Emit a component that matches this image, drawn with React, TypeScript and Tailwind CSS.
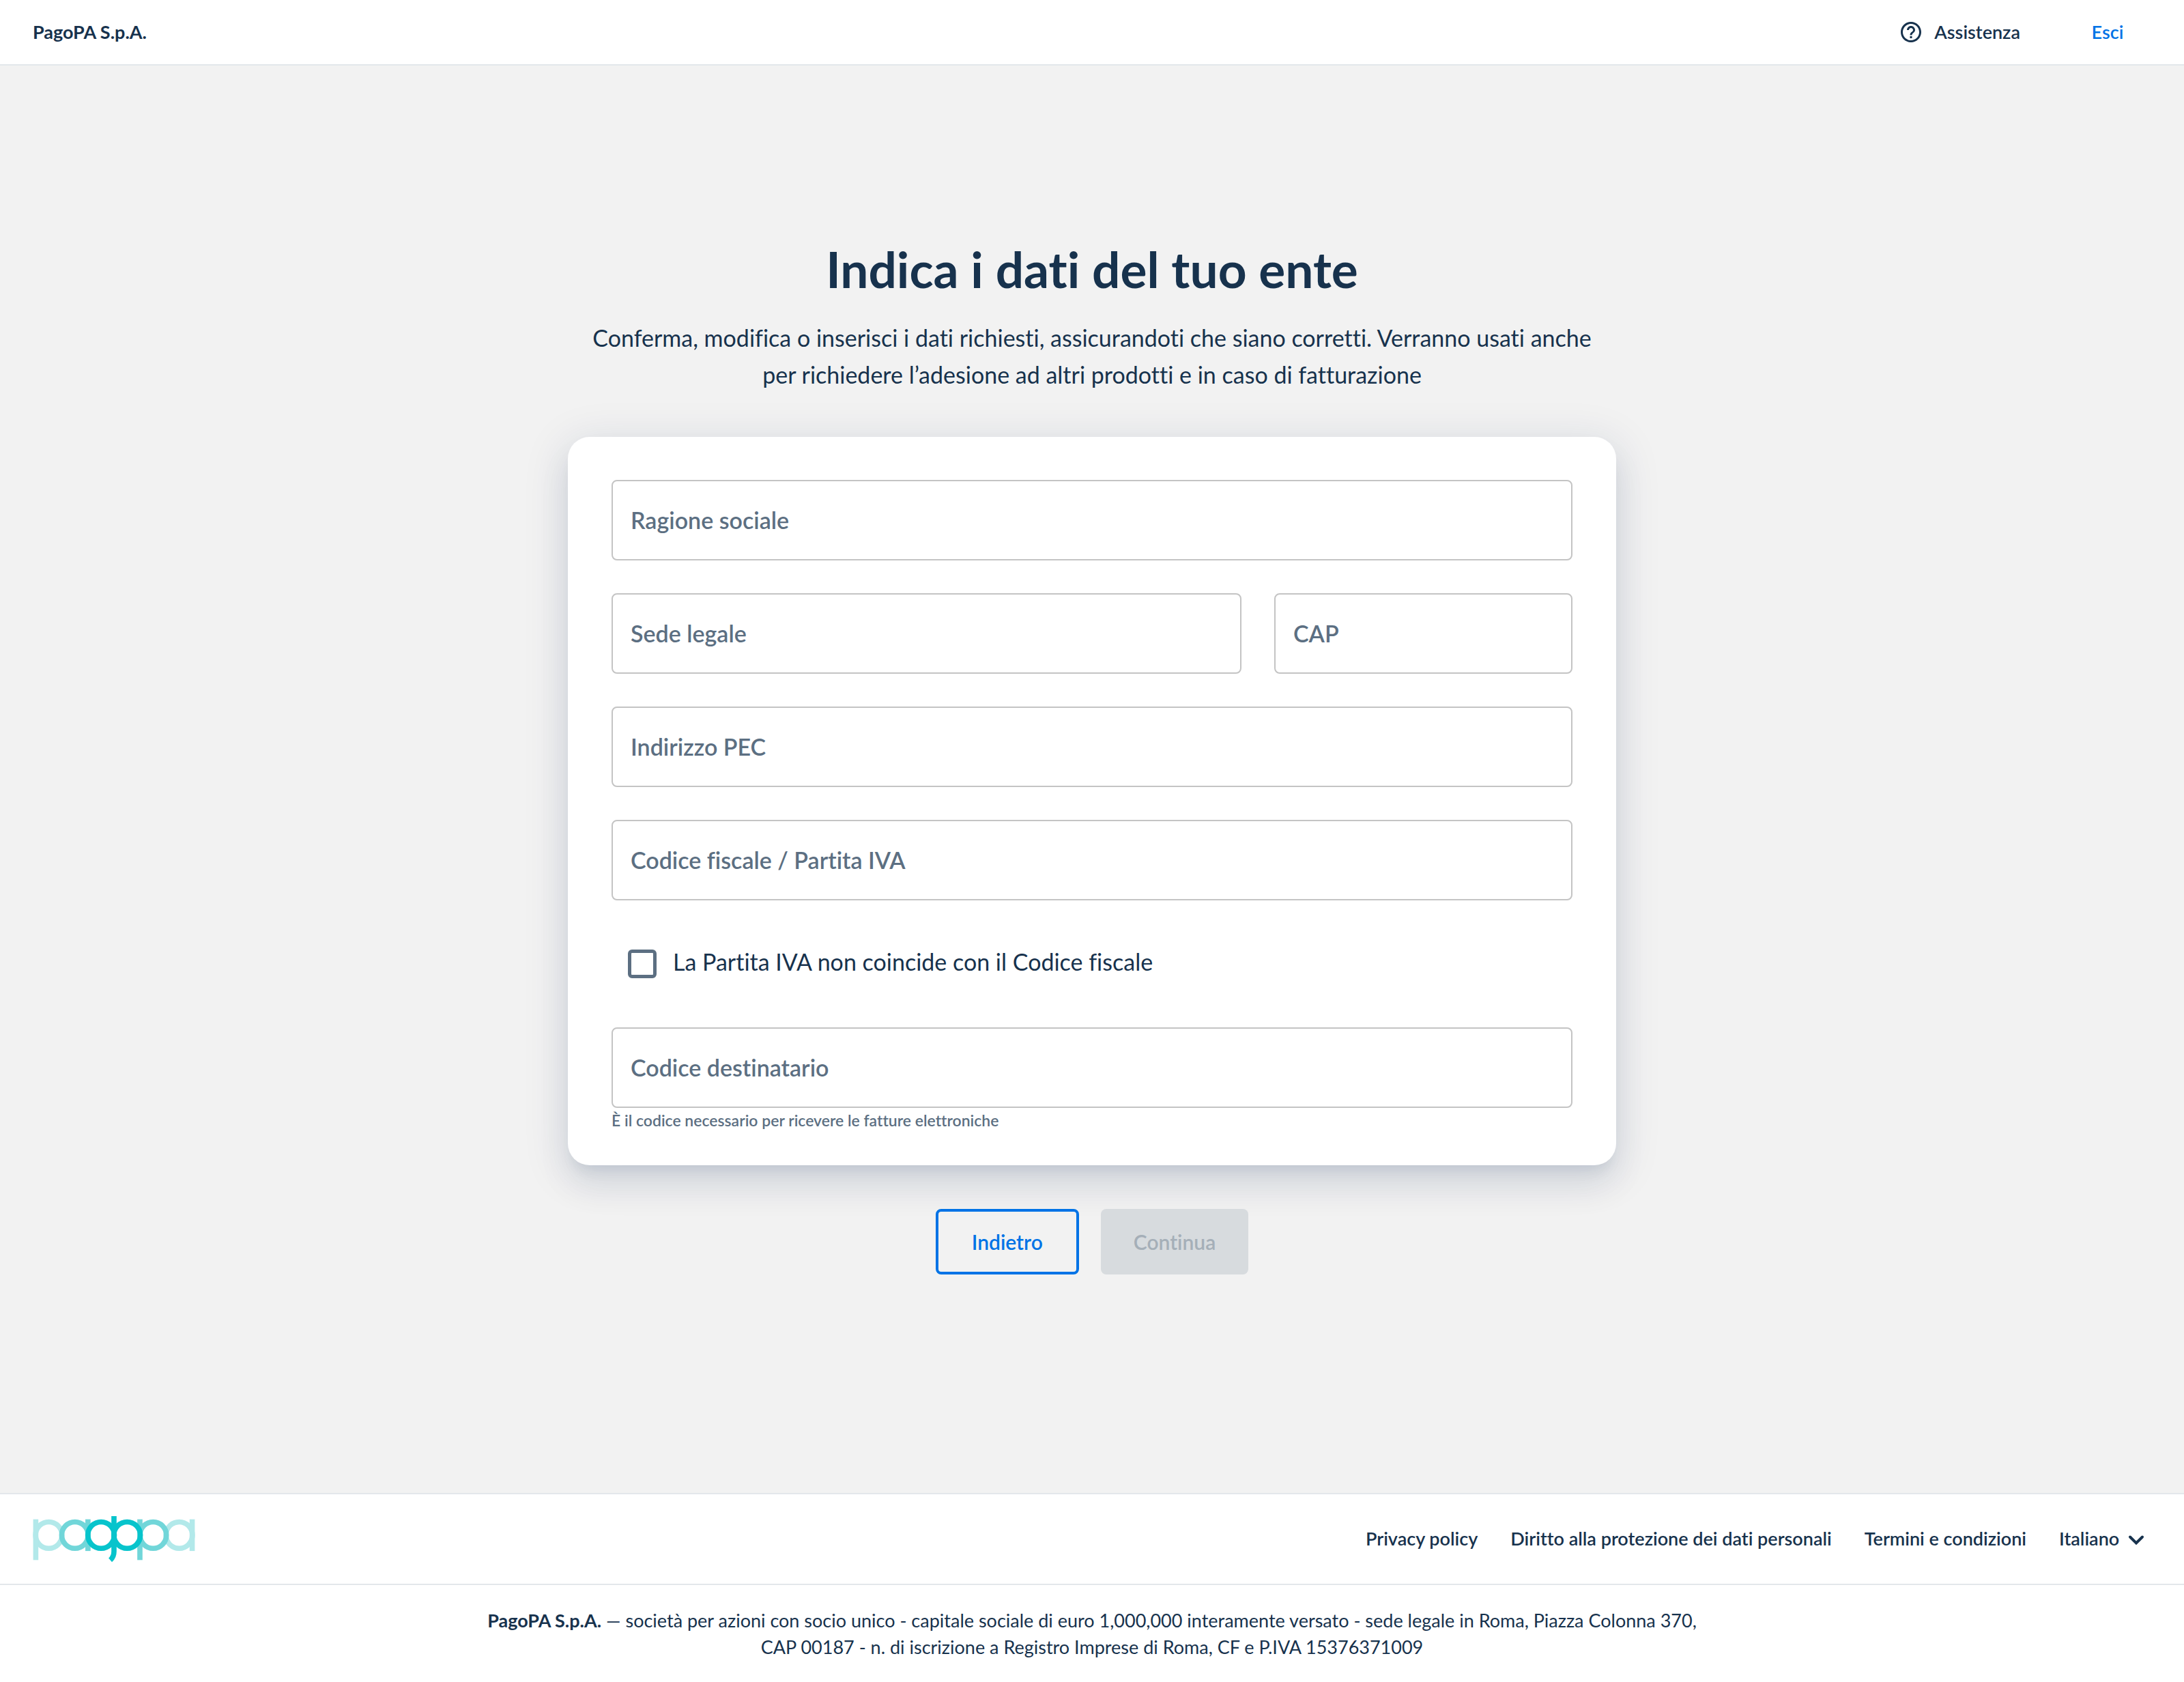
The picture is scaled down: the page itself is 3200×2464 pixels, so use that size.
import React from 'react';

type FieldProps = { id: string; label: string; type?: string; helper?: string; className?: string };

function Field({ id, label, type = 'text', helper, className = '' }: FieldProps) {
  return (
    <div className={className}>
      <div className="relative">
        <input
          id={id}
          type={type}
          placeholder=" "
          aria-describedby={helper ? `${id}-helper` : undefined}
          className="peer block h-[118px] w-full rounded-lg border-2 border-[#c4c4c4] bg-white px-[26px] text-[34px] outline-none focus:border-[#0073e6]"
        />
        <label
          htmlFor={id}
          className="pointer-events-none absolute inset-y-0 left-7 flex items-center pb-0.5 text-[34px] font-semibold text-[#5c6f82] peer-focus:hidden peer-[:not(:placeholder-shown)]:hidden"
        >
          {label}
        </label>
      </div>
      {helper && (
        <p id={`${id}-helper`} className="text-[23px] leading-9 font-semibold text-[#5c6f82]">
          {helper}
        </p>
      )}
    </div>
  );
}

function HelpIcon() {
  return (
    <svg viewBox="0 0 24 24" className="size-9" fill="currentColor" aria-hidden="true">
      <path d="M11 18h2v-2h-2v2zm1-16C6.48 2 2 6.48 2 12s4.48 10 10 10 10-4.48 10-10S17.52 2 12 2zm0 18c-4.41 0-8-3.59-8-8s3.59-8 8-8 8 3.59 8 8-3.59 8-8 8zm0-14c-2.21 0-4 1.79-4 4h2c0-1.1.9-2 2-2s2 .9 2 2c0 2-3 1.75-3 5h2c0-2.25 3-2.5 3-5 0-2.21-1.79-4-4-4z" />
    </svg>
  );
}

function Logo() {
  return (
    <svg
      viewBox="144 152 714 202"
      className="h-[67px] w-[238px]"
      fill="none"
      strokeWidth="23"
      role="img"
      aria-label="PagoPA"
    >
      <g stroke="#b2e9ea">
        <circle cx="213" cy="236" r="58.5" />
        <path d="M155.5 166V346" />
        <circle cx="789" cy="236" r="58.5" />
        <path d="M846.5 166V306" />
      </g>
      <g stroke="#71d6d9">
        <circle cx="328.5" cy="236" r="58.5" />
        <path d="M386 166V306" />
        <circle cx="674" cy="236" r="58.5" />
        <path d="M615.5 166V346" />
      </g>
      <g stroke="#07c4cc">
        <circle cx="444" cy="236" r="58.5" />
        <circle cx="559" cy="236" r="58.5" />
        <path d="M501 152V308Q501 332 484.5 346" />
      </g>
    </svg>
  );
}

function Chevron() {
  return (
    <svg
      viewBox="0 0 44 44"
      className="pointer-events-none absolute top-1/2 right-0 size-11 -translate-y-1/2"
      fill="none"
      stroke="currentColor"
      strokeWidth="4"
      strokeLinecap="round"
      aria-hidden="true"
    >
      <path d="M13 18.5L22 27.5L31 18.5" />
    </svg>
  );
}

export default function App() {
  return (
    <div className="flex min-h-screen flex-col bg-[#f2f2f2] font-['Lato',sans-serif] text-[#17324d] [font-variant-ligatures:none]">
      <header className="flex h-24 items-center justify-between border-b-2 border-[#e3e7eb] bg-white px-12">
        <a href="#" className="text-[27px] font-bold">
          PagoPA S.p.A.
        </a>
        <div className="flex items-center text-[27px] font-semibold">
          <button type="button" className="mr-16 flex items-center gap-4">
            <HelpIcon />
            Assistenza
          </button>
          <button type="button" className="w-32 text-center text-[#0073e6]">
            Esci
          </button>
        </div>
      </header>

      <main className="flex flex-1 flex-col items-center px-12 pt-[248px] pb-24">
        <h1 className="mb-6 text-center text-[73px] leading-[100px] font-bold">Indica i dati del tuo ente</h1>
        <p className="text-center text-[34px] leading-[54px]">
          Conferma, modifica o inserisci i dati richiesti, assicurandoti che siano corretti. Verranno usati anche
          <br />
          per richiedere l’adesione ad altri prodotti e in caso di fatturazione
        </p>

        <form className="mt-16 flex w-full flex-col items-center" onSubmit={(e) => e.preventDefault()}>
          <div className="flex w-full max-w-[1536px] flex-col gap-12 rounded-[32px] bg-white px-16 pt-[63px] pb-12 shadow-[0_16px_20px_-10px_rgba(0,43,85,0.1),0_32px_48px_4px_rgba(0,43,85,0.05),0_12px_60px_10px_rgba(0,43,85,0.1)]">
            <Field id="business-name" label="Ragione sociale" />
            <div className="flex gap-12">
              <Field id="registered-office" label="Sede legale" className="flex-1" />
              <Field id="zip-code" label="CAP" className="w-[437px]" />
            </div>
            <Field id="pec" label="Indirizzo PEC" type="email" />
            <Field id="tax-code" label="Codice fiscale / Partita IVA" />
            <div className="flex h-[90px] items-center gap-6 pl-6">
              <input
                id="vat-differs"
                type="checkbox"
                className="size-[42px] appearance-none rounded-md border-[5px] border-[#5c6f82] checked:bg-[#0073e6]"
              />
              <label htmlFor="vat-differs" className="pb-2 text-[34px]">
                La Partita IVA non coincide con il Codice fiscale
              </label>
            </div>
            <Field
              id="recipient-code"
              label="Codice destinatario"
              helper="È il codice necessario per ricevere le fatture elettroniche"
            />
          </div>

          <div className="mt-16 flex gap-8 text-[30px] font-semibold">
            <button type="button" className="h-24 rounded-lg border-4 border-[#0073e6] px-[49px] text-[#0073e6]">
              Indietro
            </button>
            <button type="submit" disabled className="h-24 rounded-lg bg-[#d7dbde] px-12 text-[#a5afb8]">
              Continua
            </button>
          </div>
        </form>
      </main>

      <footer className="bg-white">
        <div className="flex items-center justify-between border-y-2 border-[#e3e7eb] px-12 py-8">
          <a href="#">
            <Logo />
          </a>
          <nav className="flex items-center gap-12 text-[27px] font-semibold">
            <a href="#">Privacy policy</a>
            <a href="#">Diritto alla protezione dei dati personali</a>
            <a href="#">Termini e condizioni</a>
            <div className="relative">
              <select aria-label="Lingua" className="block appearance-none bg-transparent pr-[46px]">
                <option>Italiano</option>
              </select>
              <Chevron />
            </div>
          </nav>
        </div>
        <p className="px-12 py-8 text-center text-[27px] leading-[39px]">
          <b>PagoPA S.p.A.</b> — società per azioni con socio unico - capitale sociale di euro 1,000,000 interamente
          versato - sede legale in Roma, Piazza Colonna 370,
          <br />
          CAP 00187 - n. di iscrizione a Registro Imprese di Roma, CF e P.IVA 15376371009
        </p>
      </footer>
    </div>
  );
}
